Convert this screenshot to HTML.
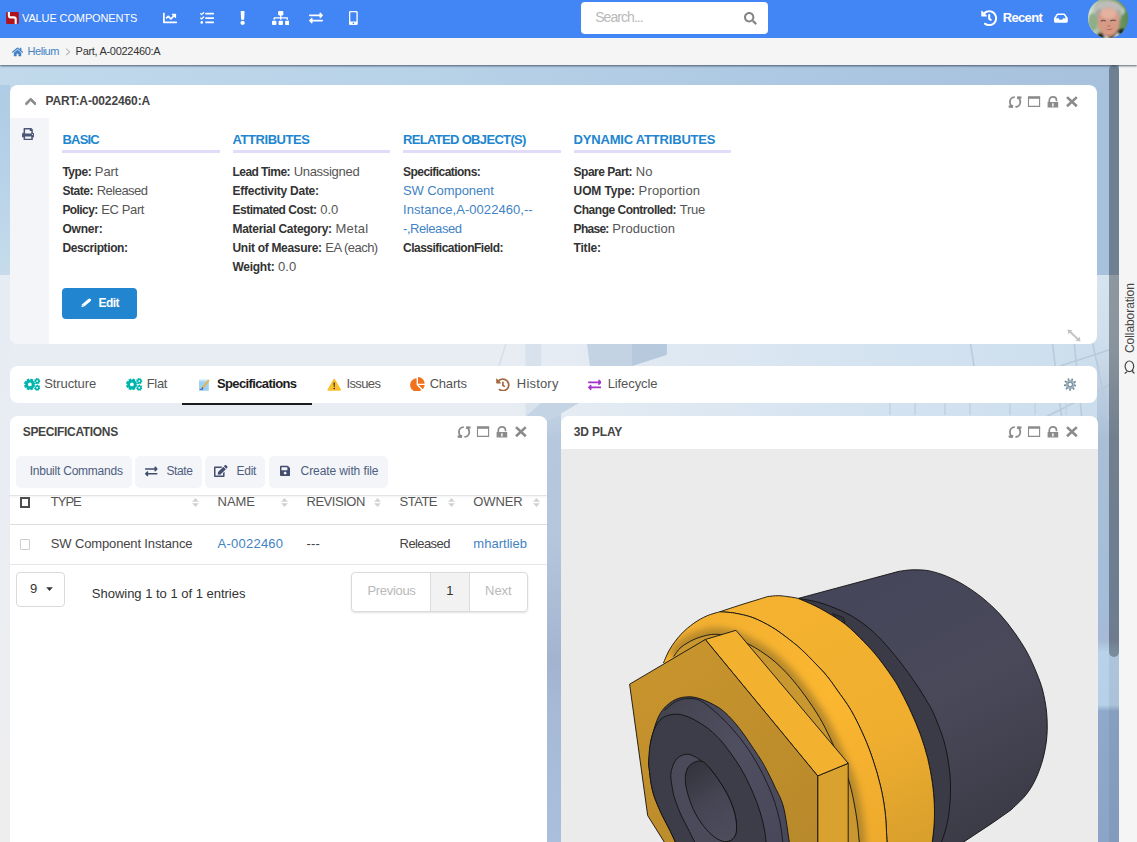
<!DOCTYPE html>
<html lang="en">
<head>
<meta charset="utf-8">
<title>Part, A-0022460:A</title>
<style>
*{box-sizing:border-box;margin:0;padding:0}
html,body{width:1137px;height:842px;overflow:hidden}
body{font-family:"Liberation Sans",sans-serif;font-size:13px;color:#444;background:#e9eef4;position:relative}
a{color:#4183c4;text-decoration:none}
span,a,b,h1,h2,h3,label,button,th,td,li{white-space:nowrap}
svg{display:block;position:absolute}
.abs{position:absolute}
/* background */
#bg{position:absolute;left:0;top:65px;width:1119px;height:777px;overflow:hidden;
 background:
  linear-gradient(90deg,rgba(232,237,243,1) 0,rgba(232,237,243,1) 45%,rgba(214,228,241,1) 75%,rgba(203,221,236,1) 100%);}
#bg .sky{position:absolute;left:0;top:0;width:1119px;height:210px;
 background:linear-gradient(90deg,#c1d9eb 0,#b7d1e7 40%,#adc8e2 70%,#a7c1dd 100%)}
#bg .skyl{position:absolute;left:0;top:20px;width:10px;height:190px;background:linear-gradient(180deg,#aecce5 0,#b6d1e8 45%,#c6dcec 100%)}
#bg .mid{position:absolute;left:547px;top:338px;width:14px;height:439px;background:linear-gradient(180deg,#c6d5e5 0,#b6c8dd 37px,#b3c6dc 137px,#a9bbd4 217px,#a2b3ce 257px,#a6bad6 307px,#a9bfdb 439px)}
#bg .lft{position:absolute;left:0;top:210px;width:10px;height:567px;background:linear-gradient(180deg,#e6ecf4 0,#e9edf3 40%,#efeeee 100%)}
#bg .rt{position:absolute;left:1097px;top:210px;width:22px;height:567px;background:linear-gradient(180deg,#d6e4f0 0,#cfdeec 70px,#b9cbdf 125px,#aabfd6 165px,#a4bdd9 325px,#a7b9d6 365px,#b7d2e9 377px,#b5d0e8 430px,#90a9cb 436px,#8ba4c7 567px)}
/* nav */
#nav{z-index:4;position:absolute;left:0;top:0;width:1137px;height:38px;background:#4285f4;color:#fff}
#nav svg{fill:#fff}
#crumb{z-index:3;position:absolute;left:0;top:38px;width:1137px;height:27px;background:#f5f5f5;box-shadow:0 1px 2px rgba(40,50,70,.75)}
#side{position:absolute;left:1119px;top:65px;width:18px;height:777px;background:#f5f5f5}
#track{position:absolute;left:1109px;top:65px;width:10px;height:777px;background:rgba(0,0,0,.06)}
#thumb{position:absolute;left:1109px;top:65px;width:10px;height:592px;border-radius:5px;background:rgba(0,0,0,.29)}
.card{position:absolute;background:#fff;border-radius:8px}
.t{position:absolute;line-height:20px;height:20px}
.ic{fill:#8a8a8a}
#nav .t{color:#fff}
#nav>.t{left:22px;top:8.2px}
#nav .ph{left:14.2px;top:5.2px;color:#b9b9b9}
#nav .rec{left:1002.8px;top:8px}
#crumb .t{top:3.2px}
#crumb .c1{left:27.6px}
#crumb .c2{left:75.6px;color:#333}
.ttl{left:35.5px;top:5.6px;color:#444}
.col{position:absolute;top:41px;width:157.5px}
.col h2{height:27px;line-height:27px;color:#2185d0;border-bottom:3px solid #e2dcf8;margin-bottom:8.6px;font-size:13px}
.col h2 span{position:relative;top:.2px}
.col p{height:19px;line-height:19px;color:#555}
.col p b{color:#333}
.col p span,.col p b,.col p a{position:relative;top:.6px}
#edit .t{left:36.5px;top:5.400px;color:#fff}
#tabs li .t{top:7.8px;color:#555}
#tabs li:nth-child(1) .t{left:34.3px}
#tabs li:nth-child(2) .t{left:136.8px}
#tabs li:nth-child(3) .t{left:206.9px;color:#1b1c1d}
#tabs li:nth-child(4) .t{left:336.4px}
#tabs li:nth-child(5) .t{left:419.7px}
#tabs li:nth-child(6) .t{left:506.8px}
#tabs li:nth-child(7) .t{left:597.7px}
.stl{left:12.8px;top:6.4px;color:#444}
.tb{position:absolute;top:40.1px;height:32px;background:#f3f5f8;border-radius:5px;color:#4f5d7e}
.tb svg{fill:#434e6e}
.tb .t{top:5.2px}
.tb:nth-of-type(1) .t{left:13.5px}
.tb:nth-of-type(2) .t{left:31.3px}
.tb:nth-of-type(3) .t{left:31.2px}
.tb:nth-of-type(4) .t{left:31.6px}
#spec table,#spec thead,#spec tbody,#spec tr,#spec th,#spec td{display:block;position:static;font-weight:400}
.cb{position:absolute;width:10.6px;height:10.8px;display:block}
.so{top:82.700px}
.t.h{top:76px;color:#555}
.t.r{top:118.600px;color:#444}
a.t.r{color:#4183c4}
#spec th:nth-child(2) .t,#spec td:nth-child(2) .t{left:40.800px}
#spec th:nth-child(3) .t,#spec td:nth-child(3) .t{left:207.600px}
#spec th:nth-child(4) .t,#spec td:nth-child(4) .t{left:296.500px}
#spec th:nth-child(5) .t,#spec td:nth-child(5) .t{left:389.600px}
#spec th:nth-child(6) .t,#spec td:nth-child(6) .t{left:463.300px}
#len .t{left:12.700px;top:5.400px;color:#333}
.info{left:81.800px;top:168.300px;color:#333}
#pg .t{top:7.800px;color:#b9b9b9}
#pg .pv{left:15px}
#pg .p1{left:93.800px;color:#333}
#pg .nx{left:132.700px}
</style>
</head>
<body>
<div id="bg"><div class="sky"></div><div class="skyl"></div><div class="lft"></div><div class="mid"></div><div class="rt"></div>
<svg style="left:0;top:0" width="1119" height="777" viewBox="0 65 1119 777">
<g fill="#d8e2ed"><rect x="525.400" y="340" width="15.800" height="80"/>
<path d="M586.600 340H666.800V354.800L632 366H589.800Z" fill="#c3d3e4"/><path d="M632 340H666.800V354.800L632 366Z" fill="#b7c9dd"/>
<path d="M541 403H579L550 420H522Z" fill="#c5d4e4"/>
<path d="M507 340L499 366" stroke="#d3dfeb" stroke-width="1.500"/>
</g>
<g stroke="#b9cadd" stroke-width="1.600" fill="none"><path d="M1052 340L1062 420M1074 340L1082 420M1092 340L1109 420M1040 420L1109 385M1060 366L1109 350M970 340L974 366"/>
<path d="M890 403V415M915 403V415M970 403V415M945 403V415M1010 403V415M1035 403V415M1066 403V415" stroke="#c3d3e4"/></g>
</svg>

</div>
<div id="track"></div><div id="thumb"></div>

<header id="nav">
<svg style="left:6px;top:12px" width="13" height="12" viewBox="0 0 13 12"><rect x="0.1" y="0" width="12.7" height="11.9" rx="1.2" fill="#b0131c"/><path d="M2.9 -0.6V3.6Q2.9 5.4 4.7 5.4H7.9Q9.7 5.4 9.7 7.2V12" fill="none" stroke="#fff" stroke-width="2.1"/></svg>
<span class="t" style="font-size:11px;font-weight:400;letter-spacing:-0.12px">VALUE COMPONENTS</span>
<svg style="left:163.2px;top:11px" width="14" height="14" viewBox="0 0 512 512"><path d="M496 384H64V80c0-8.840-7.160-16-16-16H16C7.160 64 0 71.160 0 80v336c0 17.670 14.330 32 32 32h464c8.840 0 16-7.160 16-16v-32c0-8.840-7.160-16-16-16zM464 96H345.940c-21.380 0-32.090 25.850-16.970 40.970l32.400 32.400L288 242.750l-73.370-73.370c-12.500-12.500-32.760-12.500-45.250 0l-68.690 68.690c-6.250 6.250-6.250 16.380 0 22.630l22.620 22.620c6.250 6.250 16.380 6.250 22.630 0L192 237.250l73.370 73.370c12.500 12.500 32.760 12.500 45.250 0l96-96 32.400 32.400c15.120 15.120 40.970 4.410 40.970-16.970V112c.010-8.840-7.150-16-15.990-16z"/></svg>
<svg style="left:199.6px;top:11px" width="14" height="14" viewBox="0 0 512 512"><path d="M139.610 35.500a12 12 0 0 0-17 0L58.930 98.810l-22.700-22.120a12 12 0 0 0-17 0L3.530 92.410a12 12 0 0 0 0 17l47.590 47.400a12.780 12.780 0 0 0 17.610 0l15.590-15.620L156.520 69a12.090 12.090 0 0 0 .090-17zm0 159.190a12 12 0 0 0-17 0l-63.680 63.720-22.700-22.100a12 12 0 0 0-17 0L3.530 252a12 12 0 0 0 0 17L51 316.500a12.770 12.770 0 0 0 17.600 0l15.700-15.690 72.200-72.220a12 12 0 0 0 .090-16.900zM64 368c-26.490 0-48.590 21.500-48.590 48S37.530 464 64 464a48 48 0 0 0 0-96zm432 16H208a16 16 0 0 0-16 16v32a16 16 0 0 0 16 16h288a16 16 0 0 0 16-16v-32a16 16 0 0 0-16-16zm0-320H208a16 16 0 0 0-16 16v32a16 16 0 0 0 16 16h288a16 16 0 0 0 16-16V80a16 16 0 0 0-16-16zm0 160H208a16 16 0 0 0-16 16v32a16 16 0 0 0 16 16h288a16 16 0 0 0 16-16v-32a16 16 0 0 0-16-16z"/></svg>
<svg style="left:240.1px;top:11px" width="5.25" height="14" viewBox="0 0 192 512"><path d="M176 432c0 44.112-35.888 80-80 80s-80-35.888-80-80 35.888-80 80-80 80 35.888 80 80zM25.260 25.199l13.600 272C39.499 309.972 50.041 320 62.830 320h66.340c12.789 0 23.331-10.028 23.970-22.801l13.600-272C167.425 11.490 156.496 0 142.770 0H49.230C35.504 0 24.575 11.490 25.260 25.199z"/></svg>
<svg style="left:271.7px;top:11.2px" width="17.5" height="14" viewBox="0 0 640 512"><path d="M128 352H32c-17.670 0-32 14.330-32 32v96c0 17.670 14.330 32 32 32h96c17.670 0 32-14.330 32-32v-96c0-17.670-14.330-32-32-32zm-24-80h192v48h48v-48h192v48h48v-57.590c0-21.170-17.230-38.410-38.410-38.410H344v-64h40c17.670 0 32-14.330 32-32V32c0-17.670-14.330-32-32-32H256c-17.670 0-32 14.330-32 32v96c0 17.670 14.330 32 32 32h40v64H94.410C73.230 224 56 241.230 56 262.410V320h48v-48zm264 80h-96c-17.670 0-32 14.330-32 32v96c0 17.670 14.330 32 32 32h96c17.670 0 32-14.330 32-32v-96c0-17.670-14.330-32-32-32zm240 0h-96c-17.670 0-32 14.330-32 32v96c0 17.670 14.330 32 32 32h96c17.670 0 32-14.330 32-32v-96c0-17.670-14.330-32-32-32z"/></svg>
<svg style="left:309.3px;top:11.2px" width="14" height="14" viewBox="0 0 512 512"><path d="M0 168v-16c0-13.255 10.745-24 24-24h360V80c0-21.367 25.899-32.042 40.971-16.971l80 80c9.372 9.373 9.372 24.569 0 33.941l-80 80C409.956 271.982 384 261.456 384 240v-48H24c-13.255 0-24-10.745-24-24zm488 152H128v-48c0-21.314-25.862-32.080-40.971-16.971l-80 80c-9.372 9.373-9.372 24.569 0 33.941l80 80C102.057 463.997 128 453.437 128 432v-48h360c13.255 0 24-10.745 24-24v-16c0-13.255-10.745-24-24-24z"/></svg>
<svg style="left:349.3px;top:11.2px" width="8.75" height="14" viewBox="0 0 320 512"><path d="M272 0H48C21.500 0 0 21.500 0 48v416c0 26.500 21.500 48 48 48h224c26.500 0 48-21.500 48-48V48c0-26.500-21.500-48-48-48zM160 480c-17.700 0-32-14.300-32-32s14.300-32 32-32 32 14.300 32 32-14.300 32-32 32zm112-108c0 6.600-5.400 12-12 12H60c-6.600 0-12-5.400-12-12V60c0-6.600 5.400-12 12-12h200c6.600 0 12 5.400 12 12v312z"/></svg>
<div class="abs" id="search" style="left:581px;top:2px;width:187px;height:32px;background:#fff;border-radius:4px">
<span class="t ph" style="font-size:14px;font-weight:400;letter-spacing:-0.94px">Search...</span>
<svg style="left:163px;top:10.4px;fill:#858585" width="12.8" height="12.8" viewBox="0 0 512 512"><path d="M505 442.700L405.300 343c-4.500-4.500-10.600-7-17-7H372c27.600-35.300 44-79.700 44-128C416 93.100 322.900 0 208 0S0 93.100 0 208s93.100 208 208 208c48.300 0 92.700-16.400 128-44v16.300c0 6.400 2.500 12.500 7 17l99.700 99.700c9.400 9.400 24.600 9.400 33.900 0l28.300-28.300c9.400-9.400 9.400-24.600.1-34zM208 336c-70.700 0-128-57.200-128-128 0-70.700 57.200-128 128-128 70.700 0 128 57.200 128 128 0 70.700-57.200 128-128 128z"/></svg>
</div>
<svg style="left:980.6px;top:9.6px" width="16.4" height="16.4" viewBox="0 0 512 512"><path d="M504 255.531c.253 136.640-111.180 248.372-247.820 248.468-59.015.042-113.223-20.530-155.822-54.911-11.077-8.940-11.905-25.541-1.839-35.607l11.267-11.267c8.609-8.609 22.353-9.551 31.891-1.984C173.062 425.135 212.781 440 256 440c101.705 0 184-82.311 184-184 0-101.705-82.311-184-184-184-48.814 0-93.149 18.969-126.068 49.932l50.754 50.754c10.080 10.080 2.941 27.314-11.313 27.314H24c-8.837 0-16-7.163-16-16V38.627c0-14.254 17.234-21.393 27.314-11.314l49.372 49.372C129.209 34.136 189.552 8 256 8c136.810 0 247.747 110.780 248 247.531zm-180.912 78.784l9.823-12.630c8.138-10.463 6.253-25.542-4.210-33.679L288 256.349V152c0-13.255-10.745-24-24-24h-16c-13.255 0-24 10.745-24 24v135.651l65.409 50.874c10.463 8.137 25.541 6.253 33.679-4.210z"/></svg>
<span class="t rec" style="font-size:13px;font-weight:700;letter-spacing:-0.68px">Recent</span>
<svg style="left:1054.2px;top:11.9px" width="13.8" height="12.3" viewBox="0 0 576 512"><path d="M567.938 243.908L462.250 85.374A48.003 48.003 0 0 0 422.311 64H153.689a48 48 0 0 0-39.938 21.374L8.062 243.908A47.994 47.994 0 0 0 0 270.533V400c0 26.510 21.490 48 48 48h480c26.510 0 48-21.490 48-48V270.533a47.994 47.994 0 0 0-8.062-26.625zM162.252 128h251.497l85.333 128H376l-32 64H232l-32-64H76.918l85.334-128z"/></svg>
<svg style="left:1088px;top:-2.300px" width="40" height="40" viewBox="0 0 40 40"><defs><clipPath id="avc"><circle cx="20" cy="20" r="20"/></clipPath><linearGradient id="avb" x1="0" x2="1" y1="0" y2="0"><stop offset="0" stop-color="#dfe6dc"/><stop offset=".25" stop-color="#a9bfa0"/><stop offset=".6" stop-color="#7c9f6f"/><stop offset="1" stop-color="#5d8a4e"/></linearGradient><filter id="avf" x="-10%" y="-10%" width="120%" height="120%"><feGaussianBlur stdDeviation=".900"/></filter><filter id="avf2"><feGaussianBlur stdDeviation=".450"/></filter></defs>
<g clip-path="url(#avc)"><rect width="40" height="40" fill="url(#avb)"/>
<g filter="url(#avf)"><ellipse cx="31" cy="13" rx="6" ry="5" fill="#b9cdb4"/><ellipse cx="5" cy="24" rx="5" ry="9" fill="#8fae86"/>
<ellipse cx="20.500" cy="12" rx="14" ry="9.800" fill="#bdbdb9"/><ellipse cx="12" cy="17" rx="4.500" ry="6" fill="#a4a5a1"/><ellipse cx="29.800" cy="17.500" rx="3.600" ry="6" fill="#a9aaa6"/>
<path d="M7 42Q9 35 17 32L27 33Q33 30 36 31L38 42Z" fill="#1d2a1f"/><path d="M16 37L24 42L30 34L31.500 38L29 42H17Z" fill="#e9e6e1"/>
<ellipse cx="20.700" cy="24" rx="10.900" ry="14.500" fill="#d79a85"/><ellipse cx="20.500" cy="15.500" rx="8" ry="5.500" fill="#e3b19e"/></g>
<g filter="url(#avf2)"><path d="M12.800 23.200Q15.200 21.800 17.800 23M22.300 22.800Q25 21.500 27.800 22.600" stroke="#6f5652" stroke-width="1.300" fill="none"/>
<path d="M17.300 30.300Q21 32.800 25.300 29.800Q21.300 34 17.300 30.300Z" fill="#8b3b3c"/><path d="M19.300 27.800Q20.800 28.800 22.600 27.600" stroke="#b36a5c" stroke-width="1" fill="none"/><path d="M18.500 36.500Q21 38 24.500 36" stroke="#c08673" stroke-width=".800" fill="none"/></g>
</g></svg>


</header>
<nav id="crumb">
<svg style="left:12.2px;top:8.8px;fill:#4183c4" width="11.1" height="9.9" viewBox="0 0 576 512"><path d="M280.370 148.260L96 300.110V464a16 16 0 0 0 16 16l112.060-.290a16 16 0 0 0 15.920-16V368a16 16 0 0 1 16-16h64a16 16 0 0 1 16 16v95.640a16 16 0 0 0 16 16.050L464 480a16 16 0 0 0 16-16V300L295.670 148.260a12.190 12.190 0 0 0-15.300 0zM571.600 251.470L488 182.560V44.050a12 12 0 0 0-12-12h-56a12 12 0 0 0-12 12v72.610L318.470 43a48 48 0 0 0-61 0L4.340 251.470a12 12 0 0 0-1.600 16.900l25.500 31A12 12 0 0 0 45.150 301l235.220-193.740a12.190 12.190 0 0 1 15.300 0L530.900 301a12 12 0 0 0 16.900-1.600l25.500-31a12 12 0 0 0-1.700-16.930z"/></svg>
<a class="t c1" style="font-size:11px;font-weight:400;letter-spacing:-0.49px">Helium</a>
<svg style="left:64.6px;top:10px" width="6" height="8" viewBox="0 0 6 8"><path d="M1.200 0.700L4.600 3.900L1.200 7.100" fill="none" stroke="#b4b4b4" stroke-width="1.100"/></svg>
<span class="t c2" style="font-size:11px;font-weight:400;letter-spacing:-0.30px">Part, A-0022460:A</span>

</nav>
<aside id="side">
<div class="abs" style="left:0;top:218px;width:18px;height:70px"><span class="abs" style="left:2.300px;top:70px;width:70px;height:18px;line-height:18px;transform-origin:0 0;transform:rotate(-90deg);color:#444"><span style="font-size:12px;font-weight:400;letter-spacing:-0.07px">Collaboration</span></span></div>
<svg style="left:4.600px;top:295px" width="11" height="14" viewBox="0 0 11 14"><g fill="none" stroke="#444" stroke-width="1.200"><ellipse cx="5.400" cy="6.300" rx="4.300" ry="5.300"/><path d="M8.700 9.800Q8.200 12.500 10.500 13.200M3 11.700L0.700 13.400"/></g></svg>

</aside>

<section class="card" id="c1" style="left:10px;top:85px;width:1087px;height:258.800px">
<svg width="0" height="0"><defs><symbol id="hic" viewBox="0 0 72 14" overflow="visible"><g fill="none" stroke="#8b8b8b">
<path d="M7.800 2.200C4.300 2.300 2.900 5 2.900 7.200C2.900 9.400 3.900 10.900 5.200 11.700" stroke-width="1.800"/><path d="M1.600 10.500L6.300 10.100L5.900 12.900L1.700 12.700Z" fill="#8b8b8b" stroke="none"/>
<path d="M8.400 11.900C11.900 11.800 13.300 9.100 13.300 6.900C13.300 4.700 12.300 3.200 11 2.400" stroke-width="1.800"/><path d="M14.600 3.600L9.900 4L10.300 1.200L14.500 1.400Z" fill="#8b8b8b" stroke="none"/>
<path d="M21.500 2.500H32.600V11.400H21.500Z" stroke-width="1.100"/><path d="M21 2.500H33.100" stroke-width="2.600"/>
<path d="M42.300 7V5.400C42.300 3.300 43.800 1.900 45.900 1.900C48 1.900 49.500 3.300 49.500 5.400V6.200" stroke-width="1.700"/>
<path d="M60 2.100L69.800 11.200M69.800 2.100L60 11.200" stroke-width="2.600"/></g>
<path d="M40.600 6.900H51.200V12.600H40.600ZM45.200 8.200V11.500H46.600V8.200Z" fill="#8b8b8b" fill-rule="evenodd"/></symbol></defs></svg>
<svg style="left:14.500px;top:10px;fill:#8b8b8b" width="11.400" height="13" viewBox="0 0 448 512"><path stroke="#8b8b8b" stroke-width="34" d="M240.971 130.524l194.343 194.343c9.373 9.373 9.373 24.569 0 33.941l-22.667 22.667c-9.357 9.357-24.522 9.375-33.901.040L224 227.495 69.255 381.516c-9.379 9.335-24.544 9.317-33.901-.040l-22.667-22.667c-9.373-9.373-9.373-24.569 0-33.941L207.030 130.525c9.372-9.373 24.568-9.373 33.941-.001z"/></svg>
<h1 class="t ttl" style="font-size:12px;font-weight:700;letter-spacing:-0.12px">PART:A-0022460:A</h1>
<svg style="left:997px;top:10px" width="72" height="14"><use href="#hic"/></svg>
<div class="abs" style="left:0;top:33px;width:38.500px;height:225.800px;background:#f3f5f8;border-radius:0 0 0 8px"></div>
<svg style="left:11.500px;top:42.900px;fill:#4c5676" width="12.400" height="12.400" viewBox="0 0 512 512"><path d="M448 192V77.250c0-8.490-3.370-16.620-9.370-22.630L393.370 9.370c-6-6-14.140-9.370-22.630-9.370H96C78.330 0 64 14.330 64 32v160c-35.350 0-64 28.650-64 64v112c0 8.840 7.160 16 16 16h48v96c0 17.670 14.330 32 32 32h320c17.670 0 32-14.330 32-32v-96h48c8.840 0 16-7.160 16-16V256c0-35.350-28.650-64-64-64zm-64 256H128v-96h256v96zm0-224H128V64h192v48c0 8.840 7.160 16 16 16h48v96zm48 72c-13.250 0-24-10.750-24-24 0-13.260 10.750-24 24-24s24 10.740 24 24c0 13.250-10.750 24-24 24z"/></svg>

<div class="col" style="left:52.400px">
<h2><span style="font-size:13px;font-weight:700;letter-spacing:-0.77px">BASIC</span></h2>
<p><b style="font-size:12px;font-weight:700;letter-spacing:-0.46px">Type:</b> <span style="font-size:13px;font-weight:400;letter-spacing:-0.10px">Part</span></p>
<p><b style="font-size:12px;font-weight:700;letter-spacing:-0.44px">State:</b> <span style="font-size:13px;font-weight:400;letter-spacing:-0.52px">Released</span></p>
<p><b style="font-size:12px;font-weight:700;letter-spacing:-0.58px">Policy:</b> <span style="font-size:13px;font-weight:400;letter-spacing:-0.39px">EC Part</span></p>
<p><b style="font-size:12px;font-weight:700;letter-spacing:-0.21px">Owner:</b></p>
<p><b style="font-size:12px;font-weight:700;letter-spacing:-0.40px">Description:</b></p>
</div>
<div class="col" style="left:222.500px">
<h2><span style="font-size:13px;font-weight:700;letter-spacing:-0.43px">ATTRIBUTES</span></h2>
<p><b style="font-size:12px;font-weight:700;letter-spacing:-0.56px">Lead Time:</b> <span style="font-size:13px;font-weight:400;letter-spacing:-0.30px">Unassigned</span></p>
<p><b style="font-size:12px;font-weight:700;letter-spacing:-0.26px">Effectivity Date:</b></p>
<p><b style="font-size:12px;font-weight:700;letter-spacing:-0.49px">Estimated Cost:</b> <span style="font-size:13px;font-weight:400;letter-spacing:0.03px">0.0</span></p>
<p><b style="font-size:12px;font-weight:700;letter-spacing:-0.30px">Material Category:</b> <span style="font-size:13px;font-weight:400;letter-spacing:0.22px">Metal</span></p>
<p><b style="font-size:12px;font-weight:700;letter-spacing:-0.30px">Unit of Measure:</b> <span style="font-size:13px;font-weight:400;letter-spacing:-0.53px">EA (each)</span></p>
<p><b style="font-size:12px;font-weight:700;letter-spacing:-0.27px">Weight:</b> <span style="font-size:13px;font-weight:400;letter-spacing:0.03px">0.0</span></p>
</div>
<div class="col" style="left:393px">
<h2><span style="font-size:13px;font-weight:700;letter-spacing:-0.67px">RELATED OBJECT(S)</span></h2>
<p><b style="font-size:12px;font-weight:700;letter-spacing:-0.54px">Specifications:</b></p>
<p><a style="font-size:13px;font-weight:400;letter-spacing:-0.08px">SW Component</a></p>
<p><a style="font-size:13px;font-weight:400;letter-spacing:0.05px">Instance,A-0022460,--</a></p>
<p><a style="font-size:13px;font-weight:400;letter-spacing:-0.43px">-,Released</a></p>
<p><b style="font-size:12px;font-weight:700;letter-spacing:-0.50px">ClassificationField:</b></p>
</div>
<div class="col" style="left:563.600px">
<h2><span style="font-size:13px;font-weight:700;letter-spacing:-0.19px">DYNAMIC ATTRIBUTES</span></h2>
<p><b style="font-size:12px;font-weight:700;letter-spacing:-0.51px">Spare Part:</b> <span style="font-size:13px;font-weight:400;letter-spacing:0.24px">No</span></p>
<p><b style="font-size:12px;font-weight:700;letter-spacing:-0.12px">UOM Type:</b> <span style="font-size:13px;font-weight:400;letter-spacing:0.16px">Proportion</span></p>
<p><b style="font-size:12px;font-weight:700;letter-spacing:-0.49px">Change Controlled:</b> <span style="font-size:13px;font-weight:400;letter-spacing:-0.29px">True</span></p>
<p><b style="font-size:12px;font-weight:700;letter-spacing:-0.72px">Phase:</b> <span style="font-size:13px;font-weight:400;letter-spacing:0.07px">Production</span></p>
<p><b style="font-size:12px;font-weight:700;letter-spacing:-0.22px">Title:</b></p>
</div>
<button class="abs" id="edit" style="left:52px;top:202.800px;width:75px;height:31px;background:#2185d0;border:0;border-radius:4px;color:#fff;font-family:inherit">
<svg style="left:18.500px;top:10.200px" width="11" height="9.500" viewBox="0 0 11 9.500"><path d="M0.200 9.200L1.200 6.300L7.600 0.700Q8.600 0 9.700 0.900Q10.600 1.900 9.800 2.900L3.200 8.500Z" fill="#fff"/><path d="M1.700 7L2.700 8.100" stroke="#2185d0" stroke-width=".6"/></svg>
<span class="t" style="font-size:12px;font-weight:700;letter-spacing:-0.54px">Edit</span></button>
<svg style="left:1057px;top:243.800px" width="14" height="13" viewBox="0 0 14 13"><path d="M2.500 2.300L11.500 10.800" stroke="#c4c4c4" stroke-width="2"/><path d="M0.500 0.500L5.500 1.300L1.300 5.300ZM13.500 12.500L8.500 11.700L12.700 7.700Z" fill="#c4c4c4"/></svg>

</section>

<section class="card" id="tabs" style="left:10px;top:366px;width:1087px;height:37px">
<svg width="0" height="0"><defs><symbol id="cogs" viewBox="0 0 16.500 12.800" overflow="visible"><path fill-rule="evenodd" d="M10.40 6.54L11.82 7.39L10.78 9.88L9.18 9.48L8.98 9.68L9.38 11.28L6.89 12.32L6.04 10.90L5.76 10.90L4.91 12.32L2.42 11.28L2.82 9.68L2.62 9.48L1.02 9.88L-0.02 7.39L1.40 6.54L1.40 6.26L-0.02 5.41L1.02 2.92L2.62 3.32L2.82 3.12L2.42 1.52L4.91 0.48L5.76 1.90L6.04 1.90L6.89 0.48L9.38 1.52L8.98 3.12L9.18 3.32L10.78 2.92L11.82 5.41L10.40 6.26ZM7.80 6.40A1.90 1.90 0 1 0 4.00 6.40A1.90 1.90 0 1 0 7.80 6.40ZM15.21 2.19L16.19 2.28L16.19 3.92L15.21 4.01L15.16 4.10L15.70 4.93L14.42 5.95L13.74 5.23L13.64 5.26L13.33 6.20L11.74 5.83L11.87 4.85L11.79 4.79L10.86 5.13L10.15 3.66L11.00 3.15L11.00 3.05L10.15 2.54L10.86 1.07L11.79 1.41L11.87 1.35L11.74 0.37L13.33 0.00L13.64 0.94L13.74 0.97L14.42 0.25L15.70 1.27L15.16 2.10ZM14.10 3.10A0.90 0.90 0 1 0 12.30 3.10A0.90 0.90 0 1 0 14.10 3.10ZM15.38 9.43L16.30 9.80L15.81 11.37L14.85 11.16L14.77 11.24L15.05 12.19L13.53 12.78L13.09 11.90L12.98 11.89L12.41 12.70L10.99 11.88L11.41 10.98L11.35 10.89L10.36 10.95L10.12 9.33L11.08 9.10L11.11 9.00L10.45 8.26L11.57 7.07L12.35 7.67L12.45 7.63L12.61 6.66L14.24 6.78L14.25 7.77L14.35 7.82L15.21 7.34L16.13 8.69L15.37 9.32ZM14.10 9.70A0.90 0.90 0 1 0 12.30 9.70A0.90 0.90 0 1 0 14.10 9.70Z"/></symbol><symbol id="exch" viewBox="0 0 512 512"><path d="M0 168v-16c0-13.255 10.745-24 24-24h360V80c0-21.367 25.899-32.042 40.971-16.971l80 80c9.372 9.373 9.372 24.569 0 33.941l-80 80C409.956 271.982 384 261.456 384 240v-48H24c-13.255 0-24-10.745-24-24zm488 152H128v-48c0-21.314-25.862-32.080-40.971-16.971l-80 80c-9.372 9.373-9.372 24.569 0 33.941l80 80C102.057 463.997 128 453.437 128 432v-48h360c13.255 0 24-10.745 24-24v-16c0-13.255-10.745-24-24-24z"/></symbol></defs></svg>
<ul style="list-style:none">
<li><svg style="left:14px;top:11.800px;fill:#00b5ad" width="16.500" height="12.800"><use href="#cogs"/></svg><span class="t" style="font-size:13px;font-weight:400;letter-spacing:-0.11px">Structure</span></li>
<li><svg style="left:116.200px;top:11.800px;fill:#00b5ad" width="16.500" height="12.800"><use href="#cogs"/></svg><span class="t" style="font-size:13px;font-weight:400;letter-spacing:-0.37px">Flat</span></li>
<li class="act"><svg style="left:188.600px;top:12.600px" width="11" height="12" viewBox="0 0 11 12"><rect x="0" y="0.800" width="9.800" height="11" fill="#9fd0f0"/><rect x="0" y="0.800" width="9.800" height="1.600" fill="#c5e4f8"/><path d="M2 11L3.200 8L9.300 0.600L10.600 1.700L4.600 9.100Z" fill="#e8b440"/><path d="M2 11L3.200 8L4.600 9.100Z" fill="#3a5ea8"/><path d="M0.800 10.600Q2.500 9.600 3.700 10.800" stroke="#2e62b5" stroke-width=".9" fill="none"/></svg><span class="t" style="font-size:13px;font-weight:700;letter-spacing:-0.61px">Specifications</span><i class="abs" style="left:172.200px;top:36.800px;width:129.800px;height:2.200px;background:#1b1c1d"></i></li>
<li><svg style="left:316.500px;top:11.600px" width="14.400" height="13" viewBox="0 0 14.400 13"><path d="M7.200 0.700Q7.700 0.700 8 1.300L13.900 11.500Q14.300 12.600 13.200 12.700H1.200Q0.100 12.600 0.500 11.500L6.400 1.300Q6.700 0.700 7.200 0.700Z" fill="#fbc02d"/><path d="M6.550 4.500H7.850L7.600 9H6.800Z" fill="#222"/><circle cx="7.200" cy="10.500" r=".800" fill="#222"/></svg><span class="t" style="font-size:13px;font-weight:400;letter-spacing:-0.61px">Issues</span></li>
<li><svg style="left:399.700px;top:11.200px" width="15" height="14.200" viewBox="0 0 15 14.200"><path d="M6.600 1.300V8.100L11.400 12.900A6.700 6.700 0 1 1 6.600 1.300Z" fill="#f2711c"/><path d="M8 0.100A6.700 6.700 0 0 1 14.700 6.700H8Z" fill="#f2711c"/><path d="M8.600 8.100H14.700A6.700 6.700 0 0 1 12.800 12.300Z" fill="#f2711c"/></svg><span class="t" style="font-size:13px;font-weight:400;letter-spacing:-0.22px">Charts</span></li>
<li><svg style="left:486.200px;top:11.700px;fill:#a5673f" width="13.800" height="13.800" viewBox="0 0 512 512"><path d="M504 255.531c.253 136.640-111.180 248.372-247.820 248.468-59.015.042-113.223-20.530-155.822-54.911-11.077-8.940-11.905-25.541-1.839-35.607l11.267-11.267c8.609-8.609 22.353-9.551 31.891-1.984C173.062 425.135 212.781 440 256 440c101.705 0 184-82.311 184-184 0-101.705-82.311-184-184-184-48.814 0-93.149 18.969-126.068 49.932l50.754 50.754c10.080 10.080 2.941 27.314-11.313 27.314H24c-8.837 0-16-7.163-16-16V38.627c0-14.254 17.234-21.393 27.314-11.314l49.372 49.372C129.209 34.136 189.552 8 256 8c136.810 0 247.747 110.780 248 247.531zm-180.912 78.784l9.823-12.630c8.138-10.463 6.253-25.542-4.210-33.679L288 256.349V152c0-13.255-10.745-24-24-24h-16c-13.255 0-24 10.745-24 24v135.651l65.409 50.874c10.463 8.137 25.541 6.253 33.679-4.210z"/></svg><span class="t" style="font-size:13px;font-weight:400;letter-spacing:0.19px">History</span></li>
<li><svg style="left:577.600px;top:12px;fill:#a333c8" width="13.700" height="13.700"><use href="#exch"/></svg><span class="t" style="font-size:13px;font-weight:400;letter-spacing:-0.10px">Lifecycle</span></li>
</ul>
<svg style="left:1053.700px;top:11.900px" width="12.400" height="13" viewBox="0 0 12.400 13"><path fill-rule="evenodd" fill="#6d8a99" d="M10.50 6.51L12.58 6.98L12.27 8.54L10.16 8.17L9.49 9.27L10.78 10.97L9.53 11.96L8.17 10.32L6.94 10.74L6.83 12.87L5.24 12.83L5.25 10.69L4.04 10.22L2.59 11.79L1.40 10.73L2.77 9.10L2.16 7.96L0.04 8.23L-0.20 6.66L1.91 6.29L2.16 5.02L0.37 3.86L1.20 2.51L3.04 3.58L4.06 2.77L3.43 0.73L4.93 0.23L5.66 2.23L6.96 2.27L7.78 0.30L9.26 0.88L8.53 2.89L9.50 3.74L11.40 2.77L12.16 4.16L10.31 5.23ZM7.90 6.50A1.70 1.70 0 1 0 4.50 6.50A1.70 1.70 0 1 0 7.90 6.50Z"/><circle cx="6.200" cy="6.500" r="3.400" fill="none" stroke="#a9b9c2" stroke-width="1.500"/></svg>

</section>

<section class="card" id="spec" style="left:10px;top:415.5px;width:537px;height:440px;border-radius:8px 8px 0 0">
<h3 class="t stl" style="font-size:12px;font-weight:700;letter-spacing:-0.34px">SPECIFICATIONS</h3>
<svg style="left:446.400px;top:9.900px" width="72" height="14"><use href="#hic"/></svg>
<div class="tb" style="left:6.200px;width:115.700px"><span class="t" style="font-size:12px;font-weight:400;letter-spacing:-0.23px">Inbuilt Commands</span></div>
<div class="tb" style="left:125.100px;width:66.500px"><svg style="left:10px;top:9.700px" width="12.700" height="12.700"><use href="#exch"/></svg><span class="t" style="font-size:12px;font-weight:400;letter-spacing:-0.35px">State</span></div>
<div class="tb" style="left:195.300px;width:59.600px"><svg style="left:9.100px;top:9.800px" width="13.600" height="12.100" viewBox="0 0 576 512"><path d="M402.600 83.200l90.200 90.200c3.800 3.800 3.800 10 0 13.800L274.400 405.600l-92.800 10.300c-12.400 1.400-22.900-9.100-21.500-21.500l10.300-92.800L388.800 83.200c3.800-3.800 10-3.800 13.800 0zm162-22.900l-48.800-48.800c-15.200-15.200-39.900-15.200-55.200 0l-35.400 35.400c-3.800 3.800-3.800 10 0 13.800l90.200 90.200c3.800 3.800 10 3.800 13.800 0l35.400-35.400c15.200-15.300 15.200-40 0-55.200zM384 346.200V448H64V128h229.800c3.200 0 6.200-1.300 8.500-3.500l40-40c7.600-7.600 2.200-20.500-8.500-20.500H48C21.500 64 0 85.500 0 112v352c0 26.500 21.500 48 48 48h352c26.500 0 48-21.500 48-48V306.200c0-10.700-12.900-16-20.500-8.500l-40 40c-2.200 2.300-3.500 5.300-3.500 8.500z"/></svg><span class="t" style="font-size:12px;font-weight:400;letter-spacing:-0.25px">Edit</span></div>
<div class="tb" style="left:259px;width:118.800px"><svg style="left:11.200px;top:9.100px" width="10.300" height="11.800" viewBox="0 0 448 512"><path d="M433.941 129.941l-83.882-83.882A48 48 0 0 0 316.118 32H48C21.490 32 0 53.490 0 80v352c0 26.510 21.490 48 48 48h352c26.510 0 48-21.490 48-48V163.882a48 48 0 0 0-14.059-33.941zM224 416c-35.346 0-64-28.654-64-64 0-35.346 28.654-64 64-64s64 28.654 64 64c0 35.346-28.654 64-64 64zm96-304.520V212c0 6.627-5.373 12-12 12H76c-6.627 0-12-5.373-12-12V108c0-6.627 5.373-12 12-12h228.520c3.183 0 6.235 1.264 8.485 3.515l3.480 3.480A11.996 11.996 0 0 1 320 111.480z"/></svg><span class="t" style="font-size:12px;font-weight:400;letter-spacing:-0.10px">Create with file</span></div>
<div class="abs" style="left:0;top:79.500px;width:537px;height:1px;background:#e4e4e4;box-shadow:0 1px 2px rgba(0,0,0,.08)"></div>
<table>
<thead><tr>
<th style="left:0"><i class="cb" style="left:9.800px;top:81.600px;border:2px solid #4d4d4d;border-radius:0"></i></th>
<th><span class="t h" style="font-size:13px;font-weight:400;letter-spacing:-0.99px">TYPE</span><svg class="so" style="left:182.200px" width="7" height="9" viewBox="0 0 7 9"><path d="M3.500 0L6.900 3.700H0.100ZM3.500 9L6.900 5.300H0.100Z" fill="#d2d2d2"/></svg></th>
<th><span class="t h" style="font-size:13px;font-weight:400;letter-spacing:-0.04px">NAME</span><svg class="so" style="left:271.300px" width="7" height="9" viewBox="0 0 7 9"><path d="M3.500 0L6.900 3.700H0.100ZM3.500 9L6.900 5.300H0.100Z" fill="#d2d2d2"/></svg></th>
<th><span class="t h" style="font-size:13px;font-weight:400;letter-spacing:-0.47px">REVISION</span><svg class="so" style="left:364.400px" width="7" height="9" viewBox="0 0 7 9"><path d="M3.500 0L6.900 3.700H0.100ZM3.500 9L6.900 5.300H0.100Z" fill="#d2d2d2"/></svg></th>
<th><span class="t h" style="font-size:13px;font-weight:400;letter-spacing:-0.51px">STATE</span><svg class="so" style="left:438.300px" width="7" height="9" viewBox="0 0 7 9"><path d="M3.500 0L6.900 3.700H0.100ZM3.500 9L6.900 5.300H0.100Z" fill="#d2d2d2"/></svg></th>
<th><span class="t h" style="font-size:13px;font-weight:400;letter-spacing:-0.13px">OWNER</span><svg class="so" style="left:522.500px" width="7" height="9" viewBox="0 0 7 9"><path d="M3.500 0L6.900 3.700H0.100ZM3.500 9L6.900 5.300H0.100Z" fill="#d2d2d2"/></svg></th>
</tr></thead>
<tbody><tr>
<td><i class="cb" style="left:9.800px;top:123.800px;border:1.800px solid #cdcdcd;border-radius:1px"></i></td>
<td><span class="t r" style="font-size:13px;font-weight:400;letter-spacing:-0.14px">SW Component Instance</span></td>
<td><a class="t r" style="font-size:13px;font-weight:400;letter-spacing:0.23px">A-0022460</a></td>
<td><span class="t r" style="font-size:13px;font-weight:400;letter-spacing:0.17px">---</span></td>
<td><span class="t r" style="font-size:13px;font-weight:400;letter-spacing:-0.59px">Released</span></td>
<td><a class="t r" style="font-size:13px;font-weight:400;letter-spacing:0.03px">mhartlieb</a></td>
</tr></tbody>
</table>
<div class="abs" style="left:0;top:108.800px;width:537px;height:1px;background:#dedede"></div>
<div class="abs" style="left:0;top:148.600px;width:537px;height:1px;background:#e6e6e6"></div>
<div class="abs" id="len" style="left:6.200px;top:156.800px;width:48.500px;height:34.400px;border:1px solid #d9d9d9;border-radius:4px"><span class="t" style="font-size:13px;font-weight:400;letter-spacing:-0.73px">9</span><svg style="left:28.800px;top:13.900px" width="7" height="4.200" viewBox="0 0 7 4.200"><path d="M0.200 0.200H6.800L3.500 4Z" fill="#333"/></svg></div>
<span class="t info" style="font-size:13px;font-weight:400;letter-spacing:-0.01px">Showing 1 to 1 of 1 entries</span>
<div class="abs" id="pg" style="left:341.400px;top:156.800px;width:176.200px;height:39.400px;border:1px solid #dadada;border-radius:4px;box-shadow:0 1px 2px rgba(0,0,0,.12)">
<i class="abs" style="left:78.100px;top:0;width:39.700px;height:37.400px;background:#f2f2f2;border-left:1px solid #dcdcdc;border-right:1px solid #dcdcdc"></i>
<span class="t pv" style="font-size:13px;font-weight:400;letter-spacing:-0.31px">Previous</span><span class="t p1" style="font-size:13px;font-weight:400;letter-spacing:-1.43px">1</span><span class="t nx" style="font-size:13px;font-weight:400;letter-spacing:-0.06px">Next</span>
</div>

</section>

<section class="card" id="play" style="left:561px;top:415.5px;width:536.5px;height:440px;border-radius:8px 8px 0 0;overflow:hidden">
<h3 class="t stl" style="font-size:12px;font-weight:700;letter-spacing:-0.17px">3D PLAY</h3>
<svg style="left:445.800px;top:9.900px" width="72" height="14"><use href="#hic"/></svg>
<svg style="left:0;top:33.500px" width="536.500" height="400" viewBox="561 449 536.500 400">
<defs>
<linearGradient id="gb" gradientUnits="userSpaceOnUse" x1="880" y1="590" x2="1000" y2="830"><stop offset="0" stop-color="#46465a"/><stop offset=".45" stop-color="#49495a"/><stop offset="1" stop-color="#3b3b47"/></linearGradient>
<linearGradient id="gy" gradientUnits="userSpaceOnUse" x1="800" y1="600" x2="905" y2="842"><stop offset="0" stop-color="#f4b230"/><stop offset=".6" stop-color="#f0ae2f"/><stop offset="1" stop-color="#d9a02c"/></linearGradient>
<linearGradient id="gt" gradientUnits="userSpaceOnUse" x1="700" y1="610" x2="880" y2="842"><stop offset="0" stop-color="#f3b030"/><stop offset=".5" stop-color="#fbb730"/><stop offset="1" stop-color="#eeaa2d"/></linearGradient>
<linearGradient id="gh" gradientUnits="userSpaceOnUse" x1="660" y1="650" x2="790" y2="842"><stop offset="0" stop-color="#c8942d"/><stop offset="1" stop-color="#b98a2b"/></linearGradient>
<linearGradient id="gw" gradientUnits="userSpaceOnUse" x1="660" y1="700" x2="790" y2="820"><stop offset="0" stop-color="#43434f"/><stop offset=".5" stop-color="#4f4f61"/><stop offset="1" stop-color="#48485a"/></linearGradient>
<linearGradient id="gh2" gradientUnits="userSpaceOnUse" x1="690" y1="765" x2="735" y2="835"><stop offset="0" stop-color="#34343d"/><stop offset=".5" stop-color="#454554"/><stop offset="1" stop-color="#4c4c5d"/></linearGradient>
<filter id="bl" x="-20%" y="-20%" width="140%" height="140%"><feGaussianBlur stdDeviation="3.500"/></filter>
<clipPath id="ct"><path d="M663.4 663.0C664.5 660.7 667.0 653.9 669.9 649.1C672.8 644.3 677.0 638.6 681.0 634.3C685.0 630.0 689.6 626.3 693.9 623.2C698.2 620.1 702.5 617.8 706.8 615.9C711.1 614.0 717.6 612.5 719.7 611.8L719.7 611.8C722.2 612.0 729.0 612.1 734.5 613.1C740.0 614.1 746.8 615.4 753.0 617.7C759.2 620.0 766.0 623.7 771.5 626.9C777.0 630.1 781.3 633.4 786.2 637.1C791.1 640.8 796.1 644.6 801.0 649.1C805.9 653.6 811.5 659.4 815.8 663.9C820.1 668.4 823.3 671.6 826.9 676.0C830.5 680.4 833.1 684.3 837.1 690.0C841.1 695.7 846.5 702.6 851.0 710.3C855.5 718.0 860.2 727.9 863.9 736.2C867.6 744.5 870.3 751.9 873.1 760.2C875.9 768.5 878.5 777.4 880.5 786.0C882.5 794.6 884.0 802.6 885.1 811.9C886.2 821.2 886.6 835.6 887.0 842.0C887.4 848.4 887.4 848.7 887.5 850.0L700.0 850.0L700.0 700.0Z"/></clipPath>
</defs>
<rect x="561" y="449" width="537" height="401" fill="#ebebeb"/>
<path d="M798.3 598.4L899.0 571.3C900.3 571.1 904.3 570.5 907.0 570.2C909.7 570.0 911.4 569.7 915.2 569.8C919.0 569.9 924.4 569.8 929.6 570.9C934.8 572.0 940.7 573.8 946.5 576.2C952.3 578.6 958.2 581.5 964.3 585.2C970.4 588.9 977.2 593.6 983.1 598.4C989.0 603.2 994.6 608.4 999.8 614.1C1005.0 619.8 1009.9 626.1 1014.5 632.6C1019.1 639.1 1023.7 646.1 1027.4 652.9C1031.1 659.7 1034.2 667.0 1036.7 673.2C1039.2 679.4 1040.9 683.5 1042.6 690.0C1044.2 696.5 1045.9 704.5 1046.6 712.2C1047.3 719.9 1047.5 728.5 1046.9 736.2C1046.3 743.9 1044.9 751.2 1043.1 758.3C1041.2 765.4 1038.7 772.5 1035.8 778.7C1032.9 784.9 1029.8 790.1 1025.6 795.3C1021.4 800.5 1013.3 807.6 1010.8 810.1L992.4 823.0L963.7 842.0L951.6 850.0L925.0 850.0L931.5 850.0L932.3 842.0L934.2 823.0L934.3 804.5L932.3 782.4L927.7 758.3L920.3 734.3L911.1 712.2L901.0 691.8L893.4 678.8L878.7 658.4L863.9 641.8L845.4 624.3L826.9 612.3L812.2 604.5L798.3 598.6Z" fill="url(#gb)"/>
<path d="M798.3 598.4C801.5 599.0 811.4 600.4 817.7 602.1C824.0 603.8 830.1 606.0 836.2 608.6C842.4 611.2 848.5 613.9 854.6 617.8C860.8 621.6 867.2 626.5 873.1 631.7C879.0 636.9 884.5 643.2 889.7 649.2C894.9 655.2 899.9 661.6 904.5 667.7C909.1 673.9 913.8 680.6 917.5 686.1C921.2 691.6 924.0 696.2 926.7 700.9C929.4 705.5 931.0 707.5 933.8 714.0C936.6 720.5 941.1 731.6 943.6 739.9C946.1 748.2 947.5 756.2 948.6 763.9C949.8 771.6 950.4 778.6 950.5 786.0C950.6 793.4 950.2 801.4 949.5 808.2C948.8 815.0 947.7 821.1 946.4 826.7C945.1 832.3 942.8 838.1 941.6 842.0C940.4 845.9 939.5 848.7 939.1 850.0L931.5 850.0C931.6 848.7 931.8 846.5 932.3 842.0C932.8 837.5 933.9 829.2 934.2 823.0C934.5 816.8 934.6 811.3 934.3 804.5C934.0 797.7 933.4 790.1 932.3 782.4C931.2 774.7 929.7 766.3 927.7 758.3C925.7 750.3 923.1 742.0 920.3 734.3C917.5 726.6 914.3 719.3 911.1 712.2C907.9 705.1 904.0 697.4 901.0 691.8C898.0 686.2 897.1 684.4 893.4 678.8C889.7 673.2 883.6 664.6 878.7 658.4C873.8 652.2 869.5 647.5 863.9 641.8C858.3 636.1 851.6 629.2 845.4 624.3C839.2 619.4 832.4 615.6 826.9 612.3C821.4 609.0 817.0 606.8 812.2 604.5C807.4 602.2 800.6 599.6 798.3 598.6Z" fill="#3b3b48" stroke="#111" stroke-width=".9" stroke-linejoin="round"/>
<path d="M832.500 613.500L843.500 617.500L845 623L838 620Z" fill="#33333d" stroke="#111" stroke-width=".6"/>
<path d="M798.3 598.4L899.0 571.3C900.3 571.1 904.3 570.5 907.0 570.2C909.7 570.0 911.4 569.7 915.2 569.8C919.0 569.9 924.4 569.8 929.6 570.9C934.8 572.0 940.7 573.8 946.5 576.2C952.3 578.6 958.2 581.5 964.3 585.2C970.4 588.9 977.2 593.6 983.1 598.4C989.0 603.2 994.6 608.4 999.8 614.1C1005.0 619.8 1009.9 626.1 1014.5 632.6C1019.1 639.1 1023.7 646.1 1027.4 652.9C1031.1 659.7 1034.2 667.0 1036.7 673.2C1039.2 679.4 1040.9 683.5 1042.6 690.0C1044.2 696.5 1045.9 704.5 1046.6 712.2C1047.3 719.9 1047.5 728.5 1046.9 736.2C1046.3 743.9 1044.9 751.2 1043.1 758.3C1041.2 765.4 1038.7 772.5 1035.8 778.7C1032.9 784.9 1029.8 790.1 1025.6 795.3C1021.4 800.5 1013.3 807.6 1010.8 810.1L992.4 823.0L963.7 842.0L951.6 850.0" fill="none" stroke="#111" stroke-width=".9" stroke-linejoin="round"/>
<path d="M719.7 611.8C722.8 610.8 732.7 607.5 738.2 605.7C743.8 603.9 748.1 602.6 753.0 601.1C757.9 599.6 765.3 597.3 767.8 596.5C769.6 596.4 774.8 595.6 778.8 595.7C782.8 595.8 788.5 596.8 791.8 597.2C795.0 597.7 797.2 598.2 798.3 598.4L798.3 598.6C800.6 599.6 807.4 602.2 812.2 604.5C817.0 606.8 821.4 609.0 826.9 612.3C832.4 615.6 839.2 619.4 845.4 624.3C851.6 629.2 858.3 636.1 863.9 641.8C869.5 647.5 873.8 652.2 878.7 658.4C883.6 664.6 889.7 673.2 893.4 678.8C897.1 684.4 898.0 686.2 901.0 691.8C904.0 697.4 907.9 705.1 911.1 712.2C914.3 719.3 917.5 726.6 920.3 734.3C923.1 742.0 925.7 750.3 927.7 758.3C929.7 766.3 931.2 774.7 932.3 782.4C933.4 790.1 934.0 797.7 934.3 804.5C934.6 811.3 934.5 816.8 934.2 823.0C933.9 829.2 932.8 837.5 932.3 842.0C931.8 846.5 931.6 848.7 931.5 850.0L887.5 850.0C887.4 848.7 887.4 848.4 887.0 842.0C886.6 835.6 886.2 821.2 885.1 811.9C884.0 802.6 882.5 794.6 880.5 786.0C878.5 777.4 875.9 768.5 873.1 760.2C870.3 751.9 867.6 744.5 863.9 736.2C860.2 727.9 855.5 718.0 851.0 710.3C846.5 702.6 841.1 695.7 837.1 690.0C833.1 684.3 830.5 680.4 826.9 676.0C823.3 671.6 820.1 668.4 815.8 663.9C811.5 659.4 805.9 653.6 801.0 649.1C796.1 644.6 791.1 640.8 786.2 637.1C781.3 633.4 777.0 630.1 771.5 626.9C766.0 623.7 759.2 620.0 753.0 617.7C746.8 615.4 740.0 614.1 734.5 613.1C729.0 612.1 722.2 612.0 719.7 611.8Z" fill="url(#gy)" stroke="#111" stroke-width=".9" stroke-linejoin="round"/>
<path d="M663.4 663.0C664.5 660.7 667.0 653.9 669.9 649.1C672.8 644.3 677.0 638.6 681.0 634.3C685.0 630.0 689.6 626.3 693.9 623.2C698.2 620.1 702.5 617.8 706.8 615.9C711.1 614.0 717.6 612.5 719.7 611.8L719.7 611.8C722.2 612.0 729.0 612.1 734.5 613.1C740.0 614.1 746.8 615.4 753.0 617.7C759.2 620.0 766.0 623.7 771.5 626.9C777.0 630.1 781.3 633.4 786.2 637.1C791.1 640.8 796.1 644.6 801.0 649.1C805.9 653.6 811.5 659.4 815.8 663.9C820.1 668.4 823.3 671.6 826.9 676.0C830.5 680.4 833.1 684.3 837.1 690.0C841.1 695.7 846.5 702.6 851.0 710.3C855.5 718.0 860.2 727.9 863.9 736.2C867.6 744.5 870.3 751.9 873.1 760.2C875.9 768.5 878.5 777.4 880.5 786.0C882.5 794.6 884.0 802.6 885.1 811.9C886.2 821.2 886.6 835.6 887.0 842.0C887.4 848.4 887.4 848.7 887.5 850.0L700.0 850.0L700.0 700.0Z" fill="url(#gt)"/>
<g clip-path="url(#ct)"><path d="M673.6 656.5C674.8 655.0 677.6 650.1 681.0 647.3C684.4 644.5 689.6 641.5 693.9 639.5C698.2 637.5 703.1 636.2 706.8 635.3C710.5 634.4 713.1 634.3 716.0 634.3C718.9 634.2 722.7 634.9 724.0 635.0C726.2 635.6 732.8 636.9 737.0 638.5C741.2 640.1 745.4 642.4 749.3 644.5C753.2 646.6 756.1 648.1 760.4 651.0C764.7 653.9 770.3 657.7 775.2 662.0C780.1 666.3 785.1 671.2 790.0 676.8C794.9 682.3 799.8 688.5 804.7 695.3C809.6 702.1 815.3 710.4 819.5 717.5C823.7 724.6 826.6 730.7 830.0 737.8C833.4 744.9 837.0 753.2 840.0 760.0C843.0 766.8 845.9 771.9 848.2 778.7C850.5 785.5 852.2 793.4 853.7 800.8C855.2 808.2 856.5 816.1 857.4 823.0C858.3 829.9 858.8 837.5 859.3 842.0C859.8 846.5 860.0 848.7 860.1 850.0" fill="none" stroke="#b5872a" stroke-width="13" filter="url(#bl)"/></g>
<path d="M663.4 663.0C664.5 660.7 667.0 653.9 669.9 649.1C672.8 644.3 677.0 638.6 681.0 634.3C685.0 630.0 689.6 626.3 693.9 623.2C698.2 620.1 702.5 617.8 706.8 615.9C711.1 614.0 717.6 612.5 719.7 611.8" fill="none" stroke="#111" stroke-width=".9" stroke-linejoin="round"/>
<path d="M719.7 611.8C722.2 612.0 729.0 612.1 734.5 613.1C740.0 614.1 746.8 615.4 753.0 617.7C759.2 620.0 766.0 623.7 771.5 626.9C777.0 630.1 781.3 633.4 786.2 637.1C791.1 640.8 796.1 644.6 801.0 649.1C805.9 653.6 811.5 659.4 815.8 663.9C820.1 668.4 823.3 671.6 826.9 676.0C830.5 680.4 833.1 684.3 837.1 690.0C841.1 695.7 846.5 702.6 851.0 710.3C855.5 718.0 860.2 727.9 863.9 736.2C867.6 744.5 870.3 751.9 873.1 760.2C875.9 768.5 878.5 777.4 880.5 786.0C882.5 794.6 884.0 802.6 885.1 811.9C886.2 821.2 886.6 835.6 887.0 842.0C887.4 848.4 887.4 848.7 887.5 850.0" fill="none" stroke="#111" stroke-width=".9" stroke-linejoin="round"/>
<path d="M673.6 656.5C674.8 655.0 677.6 650.1 681.0 647.3C684.4 644.5 689.6 641.5 693.9 639.5C698.2 637.5 703.1 636.2 706.8 635.3C710.5 634.4 713.1 634.3 716.0 634.3C718.9 634.2 722.7 634.9 724.0 635.0C726.2 635.6 732.8 636.9 737.0 638.5C741.2 640.1 745.4 642.4 749.3 644.5C753.2 646.6 756.1 648.1 760.4 651.0C764.7 653.9 770.3 657.7 775.2 662.0C780.1 666.3 785.1 671.2 790.0 676.8C794.9 682.3 799.8 688.5 804.7 695.3C809.6 702.1 815.3 710.4 819.5 717.5C823.7 724.6 826.6 730.7 830.0 737.8C833.4 744.9 837.0 753.2 840.0 760.0C843.0 766.8 845.9 771.9 848.2 778.7C850.5 785.5 852.2 793.4 853.7 800.8C855.2 808.2 856.5 816.1 857.4 823.0C858.3 829.9 858.8 837.5 859.3 842.0C859.8 846.5 860.0 848.7 860.1 850.0L700.0 850.0L660.0 700.0Z" fill="#c9972f"/>
<path d="M673.6 656.5C674.8 655.0 677.6 650.1 681.0 647.3C684.4 644.5 689.6 641.5 693.9 639.5C698.2 637.5 703.1 636.2 706.8 635.3C710.5 634.4 713.1 634.3 716.0 634.3C718.9 634.2 722.7 634.9 724.0 635.0C726.2 635.6 732.8 636.9 737.0 638.5C741.2 640.1 745.4 642.4 749.3 644.5C753.2 646.6 756.1 648.1 760.4 651.0C764.7 653.9 770.3 657.7 775.2 662.0C780.1 666.3 785.1 671.2 790.0 676.8C794.9 682.3 799.8 688.5 804.7 695.3C809.6 702.1 815.3 710.4 819.5 717.5C823.7 724.6 826.6 730.7 830.0 737.8C833.4 744.9 837.0 753.2 840.0 760.0C843.0 766.8 845.9 771.9 848.2 778.7C850.5 785.5 852.2 793.4 853.7 800.8C855.2 808.2 856.5 816.1 857.4 823.0C858.3 829.9 858.8 837.5 859.3 842.0C859.8 846.5 860.0 848.7 860.1 850.0" fill="none" stroke="#111" stroke-width=".9" stroke-linejoin="round"/>
<path d="M817.7 775.9L848.2 763.3L848.2 850.0L817.7 850.0Z" fill="#d9a12e" stroke="#111" stroke-width=".9" stroke-linejoin="round"/>
<path d="M705.3 639.5L736.0 630.3L848.2 763.3L817.7 775.9Z" fill="#f3b130" stroke="#111" stroke-width=".9" stroke-linejoin="round"/>
<path d="M629.6 684.2L705.3 639.5L817.7 775.9L817.7 850.0L669.3 850.0L647.7 815.6Z" fill="url(#gh)" stroke="#111" stroke-width=".9" stroke-linejoin="round"/>
<path d="M650.5 742.0C651.6 738.4 654.6 726.2 656.9 720.5C659.2 714.8 661.2 711.5 664.3 708.0C667.4 704.5 671.7 701.5 675.4 699.6C679.1 697.8 682.8 697.2 686.5 696.9C690.2 696.6 693.3 696.8 697.6 698.0C701.9 699.2 707.8 701.6 712.4 704.0C717.0 706.4 720.5 708.4 725.0 712.5C729.5 716.6 734.1 721.5 739.5 728.5C744.9 735.5 753.2 748.1 757.5 754.6C761.8 761.1 762.5 762.3 765.3 767.5C768.1 772.7 771.5 779.4 774.5 786.0C777.5 792.6 781.0 797.7 783.5 807.0C786.0 816.3 788.1 834.8 789.3 842.0C790.5 849.2 790.4 848.7 790.6 850.0L679.2 850.0C678.6 848.7 676.9 845.3 675.4 842.0C673.9 838.7 672.5 835.7 669.9 830.4C667.3 825.1 662.6 816.8 659.7 810.0C656.8 803.2 654.1 797.4 652.3 789.7C650.4 782.0 649.2 768.2 648.6 763.9Z" fill="url(#gw)" stroke="#111" stroke-width=".9" stroke-linejoin="round"/>
<path d="M664.3 710.5C666.1 709.0 671.7 703.8 675.4 701.8C679.1 699.8 682.4 698.8 686.5 698.6C690.6 698.4 695.2 698.2 700.1 700.5C705.0 702.8 710.6 707.8 716.0 712.5C721.4 717.2 727.2 723.1 732.2 728.7C737.2 734.3 741.8 740.1 746.0 746.0C750.2 751.9 754.0 757.9 757.5 764.1C761.0 770.3 764.2 776.8 767.0 783.0C769.8 789.2 772.2 794.7 774.4 801.2C776.6 807.7 778.6 815.2 780.0 822.0C781.4 828.8 782.1 837.3 782.8 842.0C783.5 846.7 783.7 848.7 783.9 850.0" fill="none" stroke="#111" stroke-width=".8"/>
<path d="M648.6 763.9C648.8 761.1 648.9 752.7 649.8 747.0C650.7 741.3 652.1 734.3 654.2 729.5C656.3 724.7 659.0 720.5 662.5 718.0C666.0 715.5 671.1 714.4 675.4 714.2C679.6 714.0 683.7 715.2 688.0 716.8C692.3 718.4 697.2 721.3 701.3 723.9C705.4 726.5 708.5 728.7 712.4 732.2C716.3 735.7 719.8 739.0 724.5 745.0C729.2 751.0 736.0 760.3 740.6 768.0C745.2 775.7 749.0 783.8 752.2 791.1C755.4 798.4 758.0 805.3 760.0 811.8C762.0 818.3 763.5 825.0 764.5 830.0C765.5 835.0 765.6 838.7 766.0 842.0C766.4 845.3 766.8 848.7 767.0 850.0L679.2 850.0C678.6 848.7 676.9 845.3 675.4 842.0C673.9 838.7 672.5 835.7 669.9 830.4C667.3 825.1 662.6 816.8 659.7 810.0C656.8 803.2 654.1 797.4 652.3 789.7C650.4 782.0 649.2 768.2 648.6 763.9Z" fill="#3d3d49" stroke="#111" stroke-width=".9" stroke-linejoin="round"/>
<path d="M673.8 795.7C673.3 792.8 671.2 783.0 670.9 778.4C670.6 773.8 671.0 771.4 672.1 768.0C673.2 764.6 674.9 760.5 677.3 758.2C679.7 755.9 683.6 754.5 686.5 754.2C689.4 753.9 692.1 755.4 694.6 756.5C697.1 757.6 700.4 760.3 701.5 761.1C702.8 762.2 706.4 764.5 709.5 768.0C712.6 771.5 716.6 776.9 719.9 781.9C723.2 786.9 726.6 792.6 729.1 798.0C731.6 803.4 733.6 809.1 734.9 814.1C736.1 819.1 736.6 824.2 736.6 827.9C736.6 831.5 736.0 833.9 734.9 836.0C733.8 838.1 731.6 839.6 730.3 840.6C729.0 841.6 728.4 840.4 727.0 842.0C725.6 843.6 722.8 848.7 722.0 850.0L698.6 850.0C697.9 848.7 696.4 845.7 694.6 842.0C692.8 838.3 690.1 832.9 687.6 827.9C685.1 822.9 681.9 817.2 679.6 811.8C677.3 806.4 674.8 798.4 673.8 795.7Z" fill="#4a4a5b" stroke="#111" stroke-width=".9" stroke-linejoin="round"/>
<path d="M701.5 761.1C698.6 760.3 694.7 762.0 692.3 763.4C689.9 764.8 688.3 766.5 687.1 769.2C685.9 771.9 685.2 775.6 685.3 779.6C685.4 783.6 686.2 788.4 687.6 793.4C689.0 798.4 691.1 804.5 693.4 809.5C695.7 814.5 698.4 819.1 701.5 823.3C704.6 827.5 708.3 831.9 711.8 834.9C715.2 837.9 719.1 840.2 722.2 841.2C725.3 842.2 728.2 841.5 730.3 840.6C732.4 839.7 733.8 838.1 734.9 836.0C736.0 833.9 736.6 831.5 736.6 827.9C736.6 824.2 736.1 819.1 734.9 814.1C733.6 809.1 731.6 803.4 729.1 798.0C726.6 792.6 723.2 786.9 719.9 781.9C716.6 776.9 712.6 771.5 709.5 768.0C706.4 764.5 704.4 761.9 701.5 761.1Z" fill="url(#gh2)" stroke="#111" stroke-width=".9" stroke-linejoin="round"/>
</svg>

</section>
</body>
</html>
